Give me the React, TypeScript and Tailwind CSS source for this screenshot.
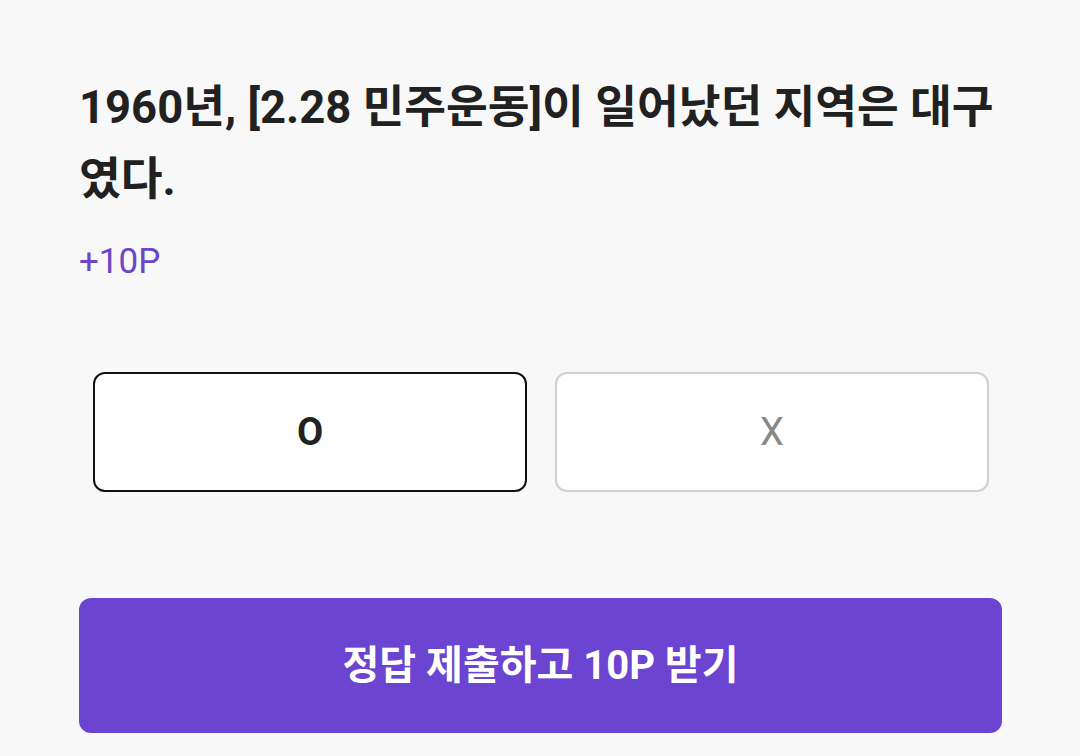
export default function App() {
  return (
    <div className="min-h-[756px] w-[1080px] bg-[#f8f8f8] pl-[79px] pr-[78px] pt-[72px] font-['Roboto','Noto_Sans_CJK_KR',sans-serif]">
      <h1 className="text-[45.4px] font-bold leading-[72px] text-[#212121]">
        1960년, [2.28 민주운동]이 일어났던 지역은 대구였다.
      </h1>
      <p className="mt-[26px] text-[35px] leading-[40px] text-[#6b46c8]">+10P</p>

      <div className="mt-[90px] grid grid-cols-2 gap-[28px] pl-[14px] pr-[13px]">
        <button className="flex h-[120px] items-center justify-center rounded-[12px] border-2 border-[#111] bg-white text-[38px] font-bold text-[#222]">
          O
        </button>
        <button className="flex h-[120px] items-center justify-center rounded-[12px] border-2 border-[#d0d0d0] bg-white text-[38px] text-[#888]">
          X
        </button>
      </div>

      <button className="mt-[106px] flex h-[135px] w-full items-center justify-center rounded-[12px] bg-[#6b44d1] text-[40px] font-bold text-white">
        정답 제출하고 10P 받기
      </button>
    </div>
  )
}
